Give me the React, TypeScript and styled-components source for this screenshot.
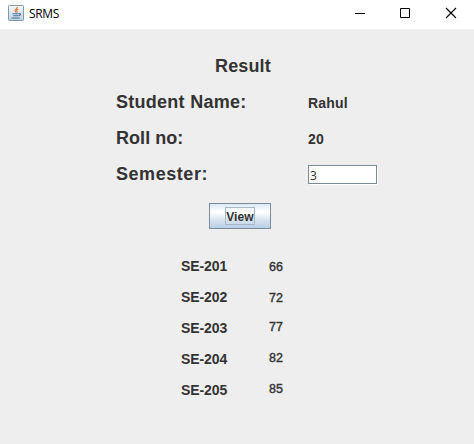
import React from 'react';
import styled, { createGlobalStyle } from 'styled-components';

const GlobalStyle = createGlobalStyle`
  * { box-sizing: border-box; }
  body { margin: 0; background: #eeeeee; overflow: hidden; }
`;

const Window = styled.div`
  width: 474px;
  height: 444px;
  display: flex;
  flex-direction: column;
  background: #eeeeee;
  color: #333333;
  font-family: 'Liberation Sans', Arial, sans-serif;
`;

const TitleBar = styled.header`
  height: 29px;
  flex: none;
  display: flex;
  align-items: flex-start;
  background: #ffffff;
  padding-left: 8px;
`;

const AppIcon = styled.svg`
  width: 16px;
  height: 16px;
  margin-top: 5px;
`;

const AppName = styled.span`
  flex: 1;
  margin-left: 5px;
  font: 12px/28px 'Open Sans', 'Noto Sans', sans-serif;
  letter-spacing: -0.35px;
  color: #000000;
`;

const Control = styled.button`
  width: 46px;
  height: 26px;
  padding: 0;
  border: 0;
  background: none;
  display: flex;
  svg { display: block; width: 46px; height: 26px; }
`;

const Content = styled.main`
  display: flex;
  flex-direction: column;
  padding-top: 19px;
`;

const Heading = styled.h1`
  margin: 0 0 0 215px;
  font-size: 18px;
  line-height: 36px;
  letter-spacing: 0.15px;
`;

const Field = styled.div`
  height: 36px;
  display: grid;
  grid-template-columns: 192px 70px;
  margin-left: 116px;
`;

const Label = styled.label<{ $spacing: number }>`
  font-size: 18px;
  font-weight: bold;
  line-height: 36px;
  letter-spacing: ${(p) => p.$spacing}px;
  white-space: nowrap;
`;

const Value = styled.span`
  font-size: 14px;
  font-weight: bold;
  line-height: 38px;
  letter-spacing: 0.2px;
`;

const SemesterInput = styled.input`
  width: 69px;
  height: 19px;
  margin-top: 9px;
  padding: 2px 0 0 1px;
  border: 1px solid #7a8a99;
  outline: none;
  border-radius: 0;
  background: #ffffff;
  color: #333333;
  font: 12px 'Open Sans', 'Noto Sans', sans-serif;
  box-shadow: 1px 1px #ffffff;
`;

const ViewButton = styled.button`
  width: 62px;
  height: 26px;
  margin: 11px 0 0 209px;
  padding: 0;
  display: flex;
  align-items: center;
  justify-content: center;
  border: 1px solid #7a8a99;
  border-radius: 0;
  background: linear-gradient(#dde8f3 0%, #ffffff 30%, #ffffff 36%, #dde8f3 60%, #b8cfe5 100%);
  color: #333333;
  font: bold 12px 'Liberation Sans', Arial, sans-serif;
`;

const FocusBox = styled.span`
  width: 30px;
  height: 18px;
  line-height: 18px;
  letter-spacing: 0.1px;
  border: 1px solid #a3b8cc;
  text-align: center;
`;

const Results = styled.section`
  margin: 22px 0 0 181px;
`;

const ResultRow = styled.div`
  height: 31px;
  display: grid;
  grid-template-columns: 88px 40px;
`;

const Subject = styled.span`
  font-size: 14px;
  font-weight: bold;
  line-height: 31px;
  letter-spacing: -0.08px;
`;

const Mark = styled.span<{ $raised?: boolean }>`
  font-size: 12.5px;
  -webkit-text-stroke: 0.4px #333333;
  line-height: ${(p) => (p.$raised ? 29 : 32)}px;
  letter-spacing: 0.1px;
`;

const results = [
  { subject: 'SE-201', mark: 66 },
  { subject: 'SE-202', mark: 72 },
  { subject: 'SE-203', mark: 77, raised: true },
  { subject: 'SE-204', mark: 82, raised: true },
  { subject: 'SE-205', mark: 85, raised: true },
];

const JavaIcon = () => (
  <AppIcon viewBox="0 0 16 16" aria-hidden="true">
    <defs>
      <linearGradient id="tile" x1="0" y1="0" x2="0" y2="1">
        <stop offset="0" stopColor="#fafbfc" />
        <stop offset="1" stopColor="#b9cfdf" />
      </linearGradient>
    </defs>
    <rect x="0.5" y="0.5" width="15" height="15" rx="0.8" fill="url(#tile)" stroke="#8599a8" />
    <path d="M9.2 1.8c.8 1.6-2.6 2.3-2.2 3.9.2.8 1 1.2 1.1 2M10.2 4c-1.6.7-1.9 1.3-1.2 2.1.5.6.2 1-.1 1.3" fill="none" stroke="#e8762c" strokeWidth="1.1" />
    <path d="M4.6 8.8h6.2M5.2 10.8h5M11 8.7c2.2-.3 2 1.6-.4 2.1M3.4 13h8.4" fill="none" stroke="#47749b" strokeWidth="1.1" />
  </AppIcon>
);

export default function App() {
  return (
    <>
      <GlobalStyle />
      <Window>
        <TitleBar>
          <JavaIcon />
          <AppName>SRMS</AppName>
          <Control aria-label="Minimize">
            <svg viewBox="0 0 46 26"><path d="M19 13.5h10" stroke="#000" /></svg>
          </Control>
          <Control aria-label="Maximize">
            <svg viewBox="0 0 46 26"><path d="M18.5 8.5h9v9h-9z" fill="none" stroke="#000" /></svg>
          </Control>
          <Control aria-label="Close">
            <svg viewBox="0 0 46 26"><path d="M18 8l10 10M28 8L18 18" stroke="#000" strokeWidth="1.1" /></svg>
          </Control>
        </TitleBar>
        <Content>
          <Heading>Result</Heading>
          <Field>
            <Label $spacing={0.27}>Student Name:</Label>
            <Value>Rahul</Value>
          </Field>
          <Field>
            <Label $spacing={0.05}>Roll no:</Label>
            <Value>20</Value>
          </Field>
          <Field>
            <Label htmlFor="semester" $spacing={0.55}>Semester:</Label>
            <SemesterInput id="semester" defaultValue="3" />
          </Field>
          <ViewButton><FocusBox>View</FocusBox></ViewButton>
          <Results>
            {results.map((r) => (
              <ResultRow key={r.subject}>
                <Subject>{r.subject}</Subject>
                <Mark $raised={r.raised}>{r.mark}</Mark>
              </ResultRow>
            ))}
          </Results>
        </Content>
      </Window>
    </>
  );
}
